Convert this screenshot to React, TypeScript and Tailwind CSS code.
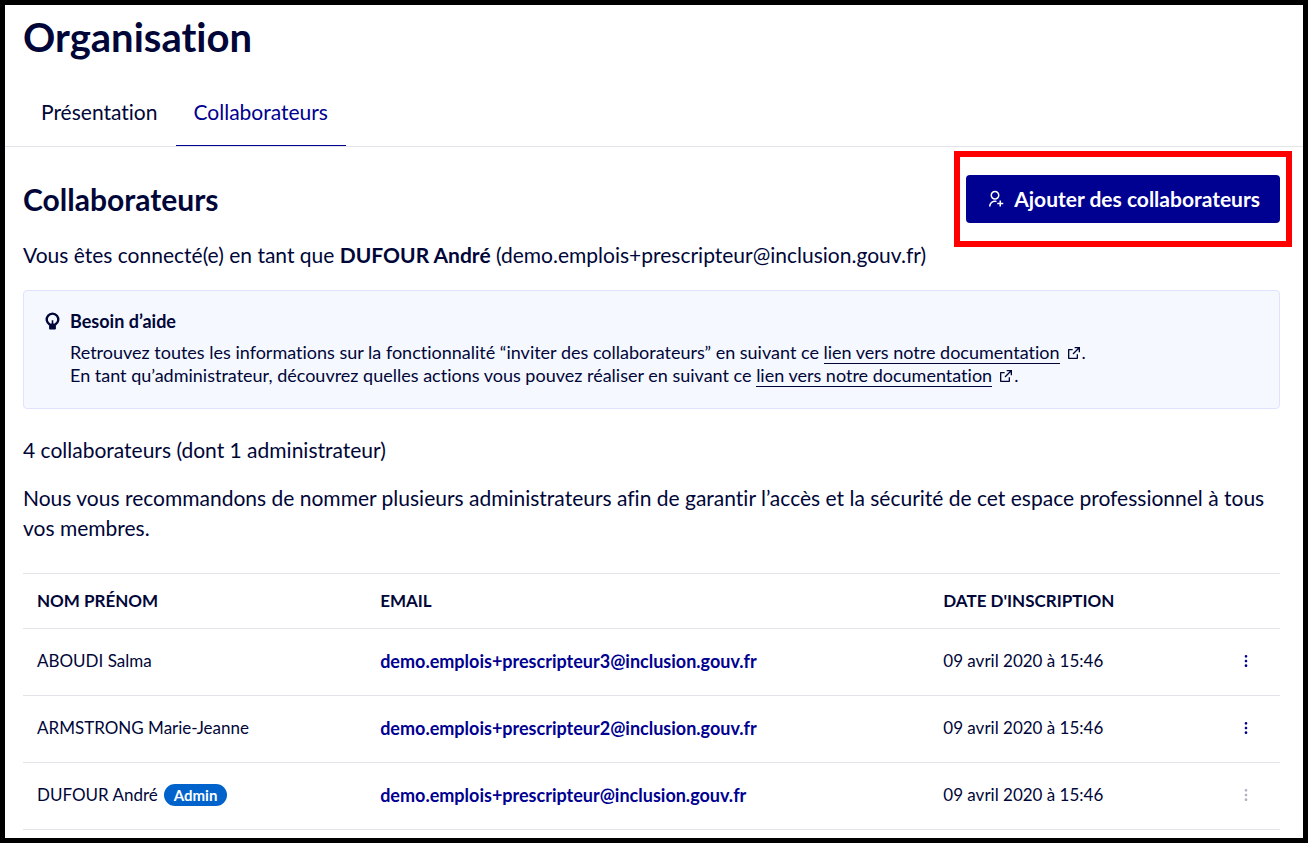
import { RiExternalLinkLine, RiMore2Fill, RiUserAddLine } from "react-icons/ri";

type Member = {
  name: string;
  email: string;
  joined: string;
  isAdmin?: boolean;
};

const members: Member[] = [
  { name: "ABOUDI Salma", email: "demo.emplois+prescripteur3@inclusion.gouv.fr", joined: "09 avril 2020 à 15:46" },
  {
    name: "ARMSTRONG Marie-Jeanne",
    email: "demo.emplois+prescripteur2@inclusion.gouv.fr",
    joined: "09 avril 2020 à 15:46",
  },
  {
    name: "DUFOUR André",
    email: "demo.emplois+prescripteur@inclusion.gouv.fr",
    joined: "09 avril 2020 à 15:46",
    isAdmin: true,
  },
];

function BulbIcon() {
  return (
    <svg viewBox="0 0 18 18" className="mt-[3px] size-[18px] shrink-0" fill="none" aria-hidden="true">
      <path d="M5.6 12.4A5.8 5.8 0 1 1 11.4 12.4" stroke="currentColor" strokeWidth="2.4" />
      <path
        d="M4.4 11.4h3.3V8.2h1.6v3.2h3.3c-.5.8-.7 1.4-.7 2.2v2.8c0 .7-.5 1.2-1.2 1.2H6.3c-.7 0-1.2-.5-1.2-1.2v-2.8c0-.8-.2-1.4-.7-2.2z"
        fill="currentColor"
      />
    </svg>
  );
}

function Tabs() {
  return (
    <nav className="flex border-b border-[#e3e3ea] pl-[18px] text-[21px] leading-[30px]">
      <a href="#presentation" className="px-[18px] pt-4 pb-[18px]">
        Présentation
      </a>
      <a href="#collaborateurs" className="border-b border-[#000091] px-[18px] pt-4 pb-[18px] text-[#000091]">
        Collaborateurs
      </a>
    </nav>
  );
}

function DocLink() {
  return (
    <>
      <a href="#documentation" className="border-b border-[#000638]">
        lien vers notre documentation
      </a>
      <RiExternalLinkLine className="ml-1.5 inline size-4 align-[-2px]" />.
    </>
  );
}

function HelpBox() {
  return (
    <div className="flex gap-2 rounded border border-[#dfe3ff] bg-[#f5f8ff] pt-[18px] pr-5 pb-[21px] pl-5 text-[18px]">
      <BulbIcon />
      <div>
        <p className="mb-2 leading-6 font-bold">Besoin d’aide</p>
        <p className="leading-[23px]">
          Retrouvez toutes les informations sur la fonctionnalité “inviter des collaborateurs” en suivant ce <DocLink />
          <br />
          En tant qu’administrateur, découvrez quelles actions vous pouvez réaliser en suivant ce <DocLink />
        </p>
      </div>
    </div>
  );
}

function MembersTable() {
  return (
    <table className="w-full table-fixed border-t border-[#e3e3ea] text-left text-[17px] leading-6">
      <thead>
        <tr className="h-[55px] border-b border-[#e3e3ea]">
          <th className="w-[27.3%] px-3.5 font-bold">NOM PRÉNOM</th>
          <th className="w-[44.8%] px-3.5 font-bold">EMAIL</th>
          <th className="px-3.5 font-bold">DATE D'INSCRIPTION</th>
          <th className="w-[68px]" aria-label="Actions" />
        </tr>
      </thead>
      <tbody>
        {members.map((member) => (
          <tr key={member.email} className="h-[67px] border-b border-[#e3e3ea]">
            <td className="px-3.5 pb-0.5">
              {member.name}
              {member.isAdmin && (
                <span className="ml-1.5 inline-block rounded-full bg-[#0063cb] px-2.5 text-[15px] leading-[22px] font-bold text-white">
                  Admin
                </span>
              )}
            </td>
            <td className="px-3.5 pb-0.5">
              <a href={`mailto:${member.email}`} className="text-[18px] font-bold text-[#000091]">
                {member.email}
              </a>
            </td>
            <td className="px-3.5 pb-0.5">{member.joined}</td>
            <td className="pb-0.5">
              <button
                type="button"
                aria-label={`Actions pour ${member.name}`}
                disabled={member.isAdmin}
                className="mx-auto block text-[#000091] disabled:text-[#b0b0c4]"
              >
                <RiMore2Fill className="size-4" />
              </button>
            </td>
          </tr>
        ))}
      </tbody>
    </table>
  );
}

export default function App() {
  return (
    <div className="min-h-screen border-5 border-black bg-white font-['Lato','Noto_Sans',sans-serif] text-[#000638] [font-variant-ligatures:none]">
      <h1 className="px-[18px] pt-2 pb-5 text-[40px] leading-12 font-bold">Organisation</h1>
      <Tabs />
      <main className="pt-7 pr-[23px] pb-2 pl-[18px] text-[21px] leading-[30px]">
        <div className="flex items-center justify-between">
          <h2 className="text-[30px] leading-9 font-bold">Collaborateurs</h2>
          <div className="relative">
            <button
              type="button"
              className="flex h-12 items-center gap-2.5 rounded bg-[#000091] px-5 font-bold text-white"
            >
              <RiUserAddLine className="size-[18px]" />
              Ajouter des collaborateurs
            </button>
            <span className="pointer-events-none absolute -top-6 -right-3 -bottom-6 -left-3 border-6 border-[#ff0000]" />
          </div>
        </div>
        <p className="mt-[17px] mb-5">
          Vous êtes connecté(e) en tant que <strong>DUFOUR André</strong> (demo.emplois+prescripteur@inclusion.gouv.fr)
        </p>
        <HelpBox />
        <p className="mt-[26px]">4 collaborateurs (dont 1 administrateur)</p>
        <p className="mt-[18px] mb-[30px]">
          Nous vous recommandons de nommer plusieurs administrateurs afin de garantir l’accès et la sécurité de cet
          espace professionnel à tous vos membres.
        </p>
        <MembersTable />
      </main>
    </div>
  );
}
